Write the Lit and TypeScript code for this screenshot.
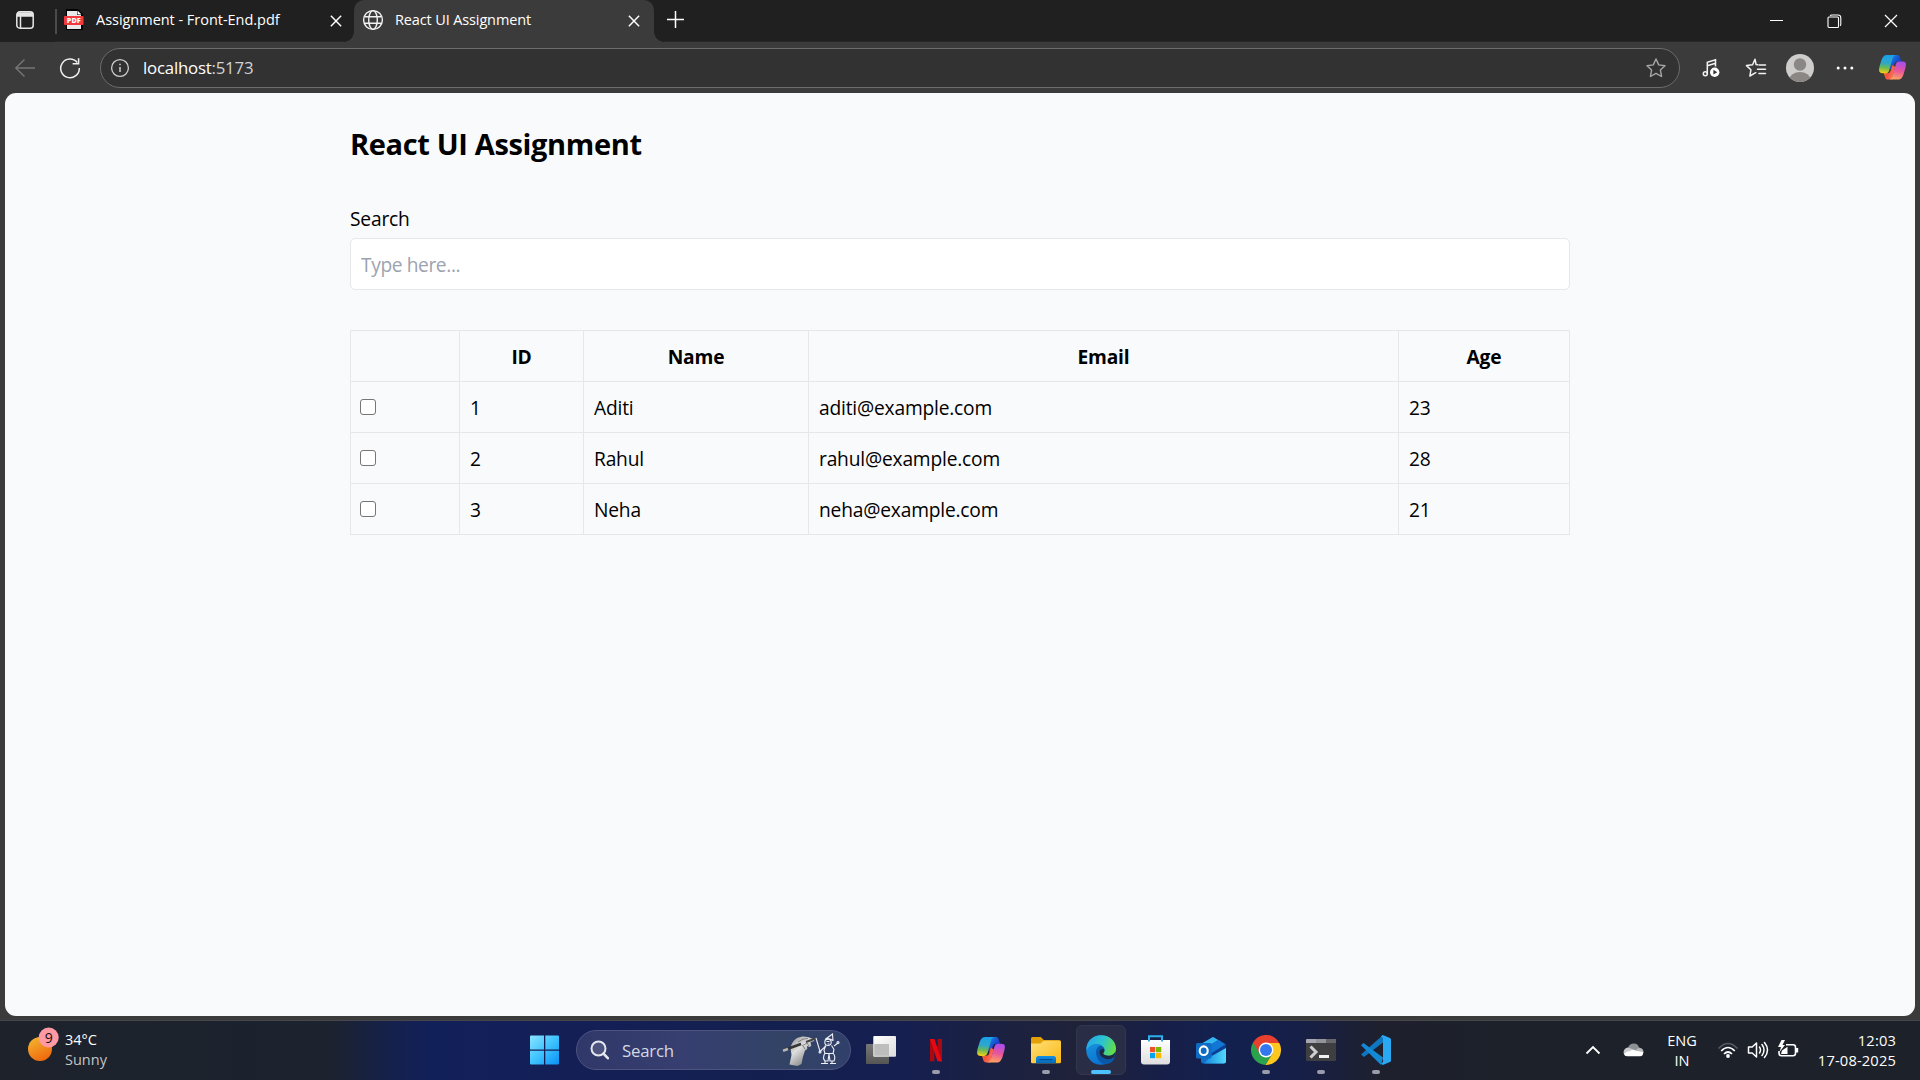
import { LitElement, html, svg, css } from "lit";
import { customElement } from "lit/decorators.js";
import { classMap } from "lit/directives/class-map.js";

/* ---------- shared artwork ---------- */

const copilot = (id: string, w: number) => html`
  <svg class="ico" width=${w} height=${w} viewBox="0 0 30 30">
    <defs>
      <linearGradient id="${id}a" x1="0.4" y1="0" x2="0.3" y2="1">
        <stop offset="0" stop-color="#1aa0ea" /><stop offset="0.45" stop-color="#2fa8c8" />
        <stop offset="0.7" stop-color="#6cbb50" /><stop offset="1" stop-color="#f5cf16" />
      </linearGradient>
      <linearGradient id="${id}b" x1="0.6" y1="0" x2="0.4" y2="1">
        <stop offset="0" stop-color="#a64df0" /><stop offset="0.5" stop-color="#e8559c" />
        <stop offset="1" stop-color="#ffa45c" />
      </linearGradient>
      <linearGradient id="${id}c" x1="0" y1="0" x2="1" y2="1">
        <stop offset="0" stop-color="#1c8fe8" /><stop offset="0.6" stop-color="#1544d0" />
        <stop offset="1" stop-color="#2560e0" />
      </linearGradient>
      <linearGradient id="${id}d" x1="0" y1="0" x2="1" y2="0.6">
        <stop offset="0" stop-color="#f8a01c" /><stop offset="0.5" stop-color="#f5503a" />
        <stop offset="1" stop-color="#ff7a62" />
      </linearGradient>
    </defs>
    <path d="M16 2h3.6c2 0 2.7 1 3.2 2.7l1.100 4H20c-1.800 0-2.700 1-3.200 2.700L15 17l-3-1z" fill="url(#${id}c)" />
    <path d="M14 27.500h-3.600c-2 0-2.700-1-3.200-2.700l-1.200-4H10c1.800 0 2.700-1 3.200-2.700l1.600-5.600 3 2z" fill="url(#${id}d)" />
    <path d="M19.300 2H8.900C5.800 2 4.200 5.300 3.200 8.600 2 12.500.4 17.300 1.500 19.400c.8 1.500 2.300 1.500 4.800 1.500h1.600c2.200 0 3.100-1.200 3.700-3.100l3.500-11.900C15.800 3.600 16.800 2 19.300 2z" fill="url(#${id}a)" />
    <path d="M10.700 27.500h10.400c3.100 0 4.700-3.300 5.700-6.600 1.200-3.900 2.800-8.700 1.700-10.800-.8-1.400-2.300-1.400-4.800-1.400h-1.600c-2.200 0-3.100 1.200-3.700 3.100l-3.500 11.900c-.7 2.200-1.700 3.800-4.200 3.800z" fill="url(#${id}b)" />
  </svg>
`;

const cross = (w: number, s: number) => html`
  <svg class="ico" width=${w} height=${w} viewBox="0 0 14 14" fill="none" stroke="#fff" stroke-width=${s}>
    <path d="M1 1l12 12M13 1L1 13" />
  </svg>
`;

/* ---------- browser chrome ---------- */

@customElement("browser-chrome")
export class BrowserChrome extends LitElement {
  static styles = css`
    :host { display: block; font-family: "Open Sans", "Noto Sans", sans-serif; color: #fff; }
    * { box-sizing: border-box; }
    .ico { display: block; flex: none; }
    .strip { display: flex; height: 42px; background: #202020; font-size: 14.500px; }
    .workspaces { width: 55px; padding: 10px 0 0 15px; }
    .pinned { display: flex; width: 299px; align-items: flex-start; border-bottom: 1px solid #292929; }
    .divider { width: 2px; height: 25px; margin-top: 9px; background: #4b4b4b; }
    .pdf { margin: 9px 0 0 7px; }
    .label { line-height: 20px; padding-top: 10px; white-space: nowrap; flex: 1; }
    .pinned .label { margin-left: 12px; letter-spacing: -0.03px; }
    .shut { margin-top: 15px; }
    .pinned .shut { margin-right: 12px; }
    .tab { position: relative; display: flex; width: 300px; background: #3b3b3b; border-radius: 10px 10px 0 0; }
    .tab::before, .tab::after { content: ""; position: absolute; bottom: 0; width: 10px; height: 10px; }
    .tab::before { left: -10px; background: radial-gradient(circle at 0 0, #202020 9.500px, #3b3b3b 10px); }
    .tab::after { right: -10px; background: radial-gradient(circle at 100% 0, #202020 9.500px, #3b3b3b 10px); }
    .tab .globe { margin: 9px 0 0 8px; }
    .tab .label { margin-left: 11px; letter-spacing: -0.13px; }
    .tab .shut { margin-right: 14px; }
    .rest { flex: 1; display: flex; justify-content: space-between; border-bottom: 1px solid #292929; }
    .plus { margin: 10px 0 0 12px; }
    .controls { display: flex; gap: 42px; padding: 14px 22px 0 0; }
    .bar { display: flex; align-items: center; height: 51px; background: #3b3b3b; }
    .back { margin-left: 14px; }
    .reload { margin-left: 23px; }
    .address {
      display: flex; flex: none; align-items: center; width: 1580px; height: 40px; margin-left: 19px; padding: 0 12px 0 9px;
      border: 1px solid #6c6c6c; border-radius: 20px; background: #323232;
      font-size: 16.800px; letter-spacing: -0.2px;
    }
    .url { flex: 1; margin-left: 13px; }
    .port { color: #d2d2d2; }
    .music { margin-left: 22px; }
    .fav { margin-left: 23px; }
    .avatar { margin-left: 19px; }
    .dots { margin-left: 22px; }
    .pilot { margin-left: 24px; }
  `;

  render() {
    return html`
      <div class="strip">
        <div class="workspaces">
          <svg class="ico" width="20" height="20" viewBox="0 0 20 20" fill="none" stroke="#e6e6e6" stroke-width="1.500">
            <rect x="1.800" y="1.800" width="16.400" height="16.400" rx="3" />
            <path d="M2 4.500h16" stroke-width="4.500" /><path d="M5.500 5v13" />
          </svg>
        </div>
        <div class="pinned">
          <div class="divider"></div>
          <svg class="ico pdf" width="20" height="22" viewBox="0 0 20 22">
            <path d="M2 0h12l5 5v16H2z" fill="#000" />
            <path d="M3 2h10v4h4v14H3z" fill="#e9e9e9" /><path d="M13.500 1.500L17.500 5.500h-4z" fill="#fff" />
            <rect x="0" y="7" width="19.500" height="9" rx="1" fill="#f23a3c" />
            <text x="9.800" y="14.200" text-anchor="middle" fill="#fff" font-size="7.300" font-weight="800" font-family="Open Sans, sans-serif">PDF</text>
          </svg>
          <span class="label">Assignment - Front-End.pdf</span>
          <span class="shut">${cross(12, 1.700)}</span>
        </div>
        <div class="tab">
          <svg class="ico globe" width="22" height="22" viewBox="0 0 22 22" fill="none" stroke="#f2f2f2" stroke-width="1.400">
            <circle cx="11" cy="11" r="9.400" /><ellipse cx="11" cy="11" rx="4.300" ry="9.400" />
            <path d="M2.400 7.700h17.200M2.400 14.300h17.200" />
          </svg>
          <span class="label">React UI Assignment</span>
          <span class="shut">${cross(12, 1.700)}</span>
        </div>
        <div class="rest">
          <svg class="ico plus" width="19" height="19" viewBox="0 0 19 19" stroke="#fff" stroke-width="1.500">
            <path d="M9.500 1v17M1 9.500h17" />
          </svg>
          <div class="controls">
            <svg class="ico" width="16" height="14" viewBox="0 0 16 14"><path d="M1 6.500h13" stroke="#fff" /></svg>
            <svg class="ico" width="15" height="15" viewBox="0 0 15 15" fill="none" stroke="#fff" stroke-width="1.100">
              <rect x="1" y="3" width="10.500" height="10.500" rx="1" />
              <path d="M3 1.500Q3.500 1 5 1h6q2.800 0 2.800 2.800V10q0 1.300-.6 1.800" />
            </svg>
            ${cross(14, 1.200)}
          </div>
        </div>
      </div>
      <div class="bar">
        <svg class="ico back" width="22" height="20" viewBox="0 0 22 20" fill="none" stroke="#767676" stroke-width="1.400">
          <path d="M21 10H1.800M10.500 1.500L1.800 10l8.700 8.500" />
        </svg>
        <svg class="ico reload" width="22" height="22" viewBox="0 0 22 22" fill="none" stroke="#f0f0f0" stroke-width="1.500">
          <path d="M18.200 5.500A9.300 9.300 0 1 0 20.300 11" /><path d="M19.600 1.300v5.400h-6" />
        </svg>
        <div class="address">
          <svg class="ico" width="20" height="20" viewBox="0 0 20 20" fill="none" stroke="#d0d0d0" stroke-width="1.300">
            <circle cx="10" cy="10" r="8.400" /><path d="M10 9v5M10 5.700v1.600" stroke-width="1.500" />
          </svg>
          <span class="url">localhost<span class="port">:5173</span></span>
          <svg class="ico" width="22" height="22" viewBox="0 0 22 22" fill="none" stroke="#a6a6a6" stroke-width="1.400" stroke-linejoin="round">
            <path d="M11 2l2.700 5.900 6.300.8-4.600 4.400 1.200 6.400L11 16.400l-5.600 3.100 1.200-6.400L2 8.700l6.300-.8z" />
          </svg>
        </div>
        <svg class="ico music" width="20" height="20" viewBox="0 0 20 20" fill="none" stroke="#f2f2f2" stroke-width="1.500">
          <circle cx="3.300" cy="15.700" r="2" /><path d="M5.300 15.700V4.200l8.200-2.400v6.700M5.300 7.700l8.200-2.400" />
          <circle cx="12.700" cy="14.200" r="4.700" fill="#fff" stroke="none" />
          <path d="M11.400 11.800v4.800l3.800-2.400z" fill="#333" stroke="none" />
        </svg>
        <svg class="ico fav" width="22" height="22" viewBox="0 0 22 22" fill="none" stroke="#f2f2f2" stroke-width="1.500" stroke-linejoin="round" stroke-linecap="round">
          <path d="M12.600 7.700l-1.500-.2L10 2.200 7.600 7.700 1.500 8.600l4.400 4.200-1 6.200 4.900-2.800 1-.5" />
          <path d="M14 8h6.500M12.500 12.300h8M14 16.500h6.500" />
        </svg>
        <svg class="ico avatar" width="28" height="28" viewBox="0 0 28 28">
          <defs><clipPath id="av"><circle cx="14" cy="14" r="14" /></clipPath></defs>
          <g clip-path="url(#av)">
            <rect width="28" height="28" fill="#cfcdcb" /><circle cx="14" cy="10.500" r="6.200" fill="#8b8785" />
            <ellipse cx="14" cy="25.500" rx="10.500" ry="7.500" fill="#8b8785" />
          </g>
        </svg>
        <svg class="ico dots" width="18" height="6" viewBox="0 0 18 6" fill="#fff">
          <circle cx="2.200" cy="3" r="1.500" /><circle cx="9" cy="3" r="1.500" /><circle cx="15.800" cy="3" r="1.500" />
        </svg>
        <span class="pilot">${copilot("bar", 29)}</span>
      </div>
    `;
  }
}

/* ---------- web page ---------- */

interface Person { id: number; name: string; email: string; age: number; }

@customElement("people-page")
export class PeoplePage extends LitElement {
  static styles = css`
    :host {
      display: block; height: 923px; padding: 31px 345px 0; border-radius: 11px; background: #f9fafc;
      box-sizing: border-box; color: #000; font: 19.200px/30px "Open Sans", "Noto Sans", sans-serif; letter-spacing: -0.19px;
    }
    * { box-sizing: border-box; }
    h1 { margin: 0; font-size: 29px; line-height: 40px; font-weight: 700; letter-spacing: -0.35px; }
    .caption { display: block; margin-top: 40px; }
    .field {
      display: block; width: 100%; height: 52px; margin-top: 4px; padding: 1px 10px; border: 1px solid #e5e7eb;
      border-radius: 5px; background: #fff; font: inherit; letter-spacing: -0.4px;
    }
    .field::placeholder { color: #9ca3af; opacity: 1; }
    table { width: 1220px; margin-top: 40px; table-layout: fixed; border-spacing: 0; border: solid #e5e7eb; border-width: 0 1px 1px 0; }
    th, td { height: 51px; padding: 2px 10px 0; border: solid #e5e7eb; border-width: 1px 0 0 1px; text-align: left; }
    th { text-align: center; font-weight: 700; letter-spacing: -0.2px; }
    .pick { width: 109px; }
    .id { width: 124px; }
    .name { width: 225px; }
    .email { width: 590px; }
    td:first-child { padding: 0 9px; }
    .box {
      display: block; appearance: none; width: 16px; height: 16px; margin: 0 0 1px; border: 1.500px solid #767676;
      border-radius: 3px; background: #fff;
    }
  `;

  private people: Person[] = [
    { id: 1, name: "Aditi", email: "aditi@example.com", age: 23 },
    { id: 2, name: "Rahul", email: "rahul@example.com", age: 28 },
    { id: 3, name: "Neha", email: "neha@example.com", age: 21 },
  ];

  render() {
    return html`
      <h1>React UI Assignment</h1>
      <label class="caption" for="q">Search</label>
      <input class="field" id="q" placeholder="Type here..." />
      <table>
        <thead>
          <tr><th class="pick"></th><th class="id">ID</th><th class="name">Name</th><th class="email">Email</th><th>Age</th></tr>
        </thead>
        <tbody>
          ${this.people.map((p) => html`
            <tr>
              <td><input class="box" type="checkbox" /></td>
              <td>${p.id}</td><td>${p.name}</td><td>${p.email}</td><td>${p.age}</td>
            </tr>`)}
        </tbody>
      </table>
    `;
  }
}

/* ---------- taskbar ---------- */

const icons = {
  start: svg`
    <defs><linearGradient id="win" x1="0" y1="0" x2="1" y2="1"><stop offset="0" stop-color="#8be4ff"/><stop offset=".5" stop-color="#3fc3ff"/><stop offset="1" stop-color="#0a90f5"/></linearGradient></defs>
    <path fill="url(#win)" d="M1 .5h13v14H0v-13q0-1 1-1zM15.300.500H28q1 0 1 1v13H15.300zM0 15.700h14v13.800H1q-1 0-1-1zM15.300 15.700H29v12.800q0 1-1 1H15.300z"/>`,
  tasks: svg`
    <defs>
      <linearGradient id="tv1" x1="0" y1="0" x2="0" y2="1"><stop offset="0" stop-color="#777"/><stop offset="1" stop-color="#555"/></linearGradient>
      <linearGradient id="tv2" x1="0" y1="0" x2="1" y2="1"><stop offset="0" stop-color="#fff"/><stop offset="1" stop-color="#dcdcdc"/></linearGradient>
    </defs>
    <rect x="0" y="9" width="23" height="20" rx="1" fill="url(#tv1)"/><rect x="7.300" y="1" width="22.700" height="20.700" rx="1" fill="url(#tv2)"/>
    <path d="M8.200 9H23v11.800H8.200z" fill="#bdbdbd"/>`,
  netflix: svg`
    <path d="M9 4h4.400v22L9 26.500zM16.600 4H21v22.500l-4.400-.5z" fill="#a90a12"/><path d="M9 4h4.400L21 26.500l-4.600-.6z" fill="#e50914"/>`,
  folder: svg`
    <defs>
      <linearGradient id="fo" x1="0" y1="0" x2="1" y2="1"><stop offset="0" stop-color="#ffe07a"/><stop offset="1" stop-color="#fbb813"/></linearGradient>
      <linearGradient id="fb" x1="0" y1="0" x2="0" y2="1"><stop offset="0" stop-color="#1290e6"/><stop offset="1" stop-color="#0568b8"/></linearGradient>
    </defs>
    <path d="M0 3.500Q0 2 1.500 2h8.300l3 3H28q2 0 2 2v4H0z" fill="#e3a008"/>
    <path d="M0 8.500h9.500l3-2.800H28.500q1.500 0 1.500 1.500V27q0 1.300-1.300 1.300H1.300Q0 28.300 0 27z" fill="url(#fo)"/>
    <path d="M5 28.300V23.500Q5 21 7.500 21h15q2.500 0 2.500 2.500v4.800z" fill="url(#fb)"/><path d="M8.500 24.600h13" stroke="#034c93" stroke-width="1.200"/>`,
  edge: svg`
    <defs>
      <linearGradient id="e1" x1="0" y1=".3" x2="1" y2=".6"><stop offset="0" stop-color="#28a8e8"/><stop offset=".5" stop-color="#2cc3d0"/><stop offset="1" stop-color="#66e03f"/></linearGradient>
      <linearGradient id="e2" x1="0" y1="0" x2=".5" y2="1"><stop offset="0" stop-color="#1b9de2"/><stop offset="1" stop-color="#0a70d0"/></linearGradient>
    </defs>
    <circle cx="15" cy="15" r="14.800" fill="url(#e2)"/>
    <path d="M.8 11C2.500 4.500 8 .2 15 .2 24 .2 30 6.500 30 13.500c0 4.500-3.500 7.300-7.500 7.300-3 0-5.300-1-5.300-2.200 0-.9 1.300-1.300 1.300-3.600 0-3.500-3.500-6-7.500-6C6.500 9 3 10.500.8 15c-.3-1.400-.3-2.600 0-4z" fill="url(#e1)"/>
    <path d="M18.500 15c0 2.300-1.300 2.700-1.300 3.600 0 1.200 2.300 2.200 5.300 2.200 3.200 0 5.500-1.500 6.800-3.700-.1 2.400-1 4.400-2.300 5.900-3 1.800-6.500 2.300-9.500 1.500-4-1.200-6-5-4.500-8.700.8-1.800 2.300-3 4.500-2.800z" fill="#1d2842"/>
    <path d="M10 17c0-3 2-5.600 4.600-6.300 2 .6 3.500 1.900 3.800 3.800-1.600-1-4-.3-4.700 1.800-.9 3 1.800 6.400 6.300 7.700 2.800.8 5.500.2 7.600-1.200.9-.6 1.200.2.8.9C26.500 27 23.500 29 19.500 29 14 29 10 22.500 10 17z" fill="#0c58a8"/>`,
  store: svg`
    <defs><linearGradient id="st" x1="0" y1="0" x2="0" y2="1"><stop offset="0" stop-color="#fff"/><stop offset="1" stop-color="#dedede"/></linearGradient></defs>
    <path d="M0 5h29v21.500q0 3-3 3H3q-3 0-3-3z" fill="url(#st)"/><path d="M8 6.500V1.300h13v5.200" fill="none" stroke="#2bb0ec" stroke-width="2"/>
    <path d="M9 12h5.200v5.200H9z" fill="#f1502d"/><path d="M15 12h5.200v5.200H15z" fill="#7db900"/><path d="M9 18h5.200v5.200H9z" fill="#05a3ee"/><path d="M15 18h5.200v5.200H15z" fill="#fdb900"/>`,
  outlook: svg`
    <defs><linearGradient id="ol" x1="0" y1="0" x2="1" y2="0"><stop offset="0" stop-color="#1589dc"/><stop offset="1" stop-color="#52d8fb"/></linearGradient></defs>
    <path d="M5 9L17 2l13 7.500V26q0 2.500-2.500 2.500h-20Q5 28.500 5 26z" fill="#1370c8"/>
    <path d="M5 9L17 2l5 3L7 14z" fill="#35b6f2"/><path d="M10 13L23 5l6 4.500L16 19z" fill="#1176d4"/><path d="M15 18.500L30 9v5L17 22z" fill="#0b3f94"/>
    <path d="M14 22l16-9v13q0 2.500-2.500 2.500H8z" fill="url(#ol)"/>
    <rect x="0" y="8" width="15.500" height="15.500" rx="1.500" fill="#0f6cc4"/><ellipse cx="7.700" cy="15.700" rx="4" ry="4.300" fill="none" stroke="#fff" stroke-width="2.100"/>`,
  chrome: svg`
    <path d="M15 15L2 7.500A15 15 0 0 0 14.500 30L21.500 18.700z" fill="#2ba24c"/>
    <path d="M15 8h13.300A15 15 0 0 1 14.500 30l7-11.500z" fill="#fdc71f"/>
    <path d="M2 7.500A15 15 0 0 1 28.300 8H15L9 19z" fill="#e8402f"/>
    <circle cx="15" cy="15" r="7.400" fill="#fff"/><circle cx="15" cy="15" r="6" fill="#3478f0"/>`,
  terminal: svg`
    <path d="M0 5q0-1 1-1h28q1 0 1 1v3.500H0z" fill="#a7a7b1"/><path d="M10 4h10v4.500H10z" fill="#93939a"/><path d="M20 4h9q1 0 1 1v3.500H20z" fill="#66666a"/>
    <path d="M0 8h30v17q0 1-1 1H1q-1 0-1-1z" fill="#3f3f41"/><path d="M4.500 11.500l5.500 5.500-5.500 5.500" fill="none" stroke="#cfcfcf" stroke-width="3"/><path d="M13 20h10v3H13z" fill="#efefef"/>`,
  code: svg`
    <path d="M0 19.500L3 22 22 7.500V0z" fill="#0f76c0"/>
    <path d="M2.500 8L0 10.300 20 30 22 22.500z" fill="#1389d6"/><path d="M21.700 0L29 3q1 .5 1 1.500v21q0 1-1 1.500l-7.300 3-1.700-1.500 2-1.500V3L20 1.500z" fill="#2aa9f2"/>`,
};

interface App { art: unknown; state?: "open" | "active"; }

@customElement("task-bar")
export class TaskBar extends LitElement {
  static styles = css`
    :host {
      display: grid; grid-template-columns: 520px 1fr auto; height: 60px; box-sizing: border-box; border-top: 1px solid #45474d;
      color: #fff; font: 14.500px/20px "Open Sans", "Noto Sans", sans-serif;
      background: linear-gradient(90deg, #1d222b 0, #1c222e 330px, #152149 385px, #12205a 430px, #141f57 560px,
        #13204f 760px, #151f50 900px, #1c2140 1010px, #1f2238 1080px, #171f48 1160px, #12204f 1230px, #161f47 1300px, #1e202d 1380px, #1c212a 1500px);
    }
    * { box-sizing: border-box; }
    .ico { display: block; flex: none; }
    .weather { display: flex; padding: 6px 0 0 28px; }
    .glyph { width: 36px; }
    .lines { display: grid; grid-auto-rows: 20px; padding: 3px 0 0 1px; }
    .soft { color: #c2c4c8; }
    .apps { display: flex; align-items: flex-start; padding-top: 4px; gap: 5px; }
    .tile { position: relative; display: flex; width: 50px; height: 50px; padding: 10px; flex: none; border-radius: 6px; border: 1px solid transparent; }
    .tile .ico { margin: -1px; }
    .active { background: #292d45; border-color: #33374d; }
    .mark { position: absolute; left: 20px; bottom: 0; width: 8px; height: 4px; border-radius: 2px; background: #9a9cab; }
    .active .mark { left: 14px; width: 20px; background: #4cc2ff; }
    .search {
      display: flex; align-items: center; width: 275px; height: 40px; margin: 5px 0 0 1px; padding: 0 10px 0 13px; border-radius: 20px;
      border: 1px solid #4d5480; background: linear-gradient(90deg, #30386a, #363f70 40%, #334366 75%, #30406a); color: #d5d8e2;
      font-size: 16.800px; letter-spacing: -0.2px;
    }
    .hint { flex: 1; margin-left: 13px; padding-top: 1px; }
    .tray { display: flex; padding-right: 24px; }
    .chev { margin: 24px 22px 0 0; }
    .cloud { margin: 22px 22px 0 0; }
    .lang { width: 32px; text-align: center; padding-top: 10px; margin-right: 19px; }
    .net { display: flex; gap: 8px; margin: 17px 17px 0 0; }
    .clock { padding-top: 9px; width: 80px; text-align: right; font-size: 14.700px; letter-spacing: 0.15px; }
  `;

  private apps: App[] = [
    { art: icons.tasks },
    { art: icons.netflix, state: "open" },
    { art: null },
    { art: icons.folder, state: "open" },
    { art: icons.edge, state: "active" },
    { art: icons.store },
    { art: icons.outlook },
    { art: icons.chrome, state: "open" },
    { art: icons.terminal, state: "open" },
    { art: icons.code, state: "open" },
  ];

  private tile(app: App) {
    return html`
      <div class=${classMap({ tile: true, active: app.state === "active" })}>
        ${app.art ? html`<svg class="ico" width="30" height="30" viewBox="0 0 30 30">${app.art}</svg>` : copilot("task", 30)}
        ${app.state ? html`<span class="mark"></span>` : null}
      </div>`;
  }

  render() {
    return html`
      <div class="weather">
        <svg class="ico glyph" width="36" height="36" viewBox="0 0 36 36">
          <defs><linearGradient id="sun" x1=".2" y1="0" x2=".7" y2="1"><stop offset="0" stop-color="#f2b531" /><stop offset="1" stop-color="#f0650c" /></linearGradient></defs>
          <circle cx="12" cy="22" r="12" fill="url(#sun)" /><circle cx="20.700" cy="10.500" r="10" fill="#ff99a4" />
          <text x="20.700" y="15.600" text-anchor="middle" font-size="14" fill="#111">9</text>
        </svg>
        <div class="lines"><span>34°C</span><span class="soft">Sunny</span></div>
      </div>
      <div class="apps">
        ${this.tile({ art: icons.start })}
        <div class="search">
          <svg class="ico" width="19" height="20" viewBox="0 0 19 20" fill="#ffffff22" stroke="#e4e6ee" stroke-width="2">
            <circle cx="8.500" cy="8.500" r="7" /><path d="M13.500 13.700l4.300 4.500" stroke-width="2.600" stroke-linecap="round" />
          </svg>
          <span class="hint">Search</span>
          <svg class="ico" width="58" height="34" viewBox="0 0 58 34">
            <defs><linearGradient id="hand" x1="0" y1="0" x2=".7" y2="1"><stop offset="0" stop-color="#8d8d8d" /><stop offset=".45" stop-color="#dedede" /><stop offset="1" stop-color="#777" /></linearGradient></defs>
            <path d="M7.500 31.500L9.500 22 8.500 15Q10 8 15 5l5-1.500Q26 3 31 6l1.500 2-4 1 .8 4-2 1-2.300-1 .3 3-2.300 1.500Q20.500 24 19.500 31l-4 2z" fill="url(#hand)" />
            <path d="M16 9q5-4 10-3.500M20 13l5-3 2 3M23 16l-2-3" stroke="#777" stroke-width=".9" fill="none" />
            <path d="M1 17.500L19 11" stroke="#353535" stroke-width="2.500" /><path d="M1 17.800l5-1.800" stroke="#b5b5b5" stroke-width="2.500" /><path d="M24 9l9.500-3.500" stroke="#444" stroke-width="2" />
            <g fill="none" stroke="#eef0f6" stroke-width="1.100">
              <path d="M34 5l4 13.500 6-5.500M43 6.500l7.500-5.500.5 7M43 6.500q4-2 8 1" /><circle cx="46" cy="9.300" r="3.200" />
              <path d="M44.500 8.500h3M45.500 11h2M43.500 12.500l-1.500 5 1 3h8l1-4-2.500-4M52 13l4-3M43 20q-3 5 0 8h3l1-7 1 7h4q2-4-1-8M43 28v2.500h-4M43 30.500h3M50 28v2.500h4M50 30.500h-2" />
              <circle cx="38" cy="19" r="1" /><circle cx="56" cy="9.500" r="1" />
            </g>
          </svg>
        </div>
        ${this.apps.map((a) => this.tile(a))}
      </div>
      <div class="tray">
        <svg class="ico chev" width="16" height="10" viewBox="0 0 16 10" fill="none" stroke="#fff" stroke-width="1.800"><path d="M1.500 8.500L8 2l6.500 6.500" /></svg>
        <svg class="ico cloud" width="21" height="14" viewBox="0 0 21 14">
          <path d="M5 5q1-4.500 6-4.500 4 0 5 4l-4 5H3z" fill="#8d9094" /><path d="M.5 10q0-5 4.500-5.500l7 2.500-3 5H3Q1 12 .5 10z" fill="#c9cbce" /><path d="M16 4.500q5 .8 4.500 5.500l-4 1-5-3z" fill="#b6b8bb" />
          <path d="M1 11q2-2.500 6-3 3-2 6-.3l7 1.300q.8 4-3 4.300H4Q1.500 13.300 1 11z" fill="#fff" />
        </svg>
        <div class="lang"><div>ENG</div><div>IN</div></div>
        <div class="net">
          <svg class="ico" width="22" height="24" viewBox="0 0 22 24" fill="none" stroke="#fff" stroke-width="1.700">
            <path d="M1.500 10.500q9.500-10 19 0" stroke="#565a62" /><path d="M4.200 13q6.800-7 13.600 0M7 16q4-4 8 0" /><circle cx="11" cy="18" r="1.900" fill="#fff" stroke="none" />
          </svg>
          <svg class="ico" width="22" height="24" viewBox="0 0 22 24" fill="none" stroke="#fff" stroke-width="1.500" stroke-linejoin="round" stroke-linecap="round">
            <path d="M1.500 9h3.700L9.500 5v14l-4.300-4H1.500zM12.500 9q2 3 0 6M15 6.500q4 5.500 0 11M17.500 4.500q6 7.500 0 15" />
          </svg>
          <svg class="ico" width="22" height="24" viewBox="0 0 22 24" fill="none" stroke="#fff" stroke-width="1.600">
            <path d="M9 6.800h7q2.500 0 2.500 2.500v6q0 2.500-2.500 2.500H4.500Q2 17.800 2 15.300V13" /><path d="M20 10v4.500" stroke-width="2.400" />
            <path d="M4 16l1-3.500 5.500-3.700V16z" fill="#fff" stroke="none" /><path d="M4.500 2L1 9h3l-1.500 5L8 7H5.500L8 2z" fill="#fff" stroke="none" />
          </svg>
        </div>
        <div class="clock"><div>12:03</div><div>17-08-2025</div></div>
      </div>
    `;
  }
}

@customElement("app-root")
export class AppRoot extends LitElement {
  static styles = css`
    :host { display: flex; flex-direction: column; width: 1920px; height: 1080px; overflow: hidden; background: #3b3b3b; }
    .page { flex: 1; padding: 0 5px; }
  `;

  render() {
    return html`
      <browser-chrome></browser-chrome>
      <div class="page"><people-page></people-page></div>
      <task-bar></task-bar>
    `;
  }
}
